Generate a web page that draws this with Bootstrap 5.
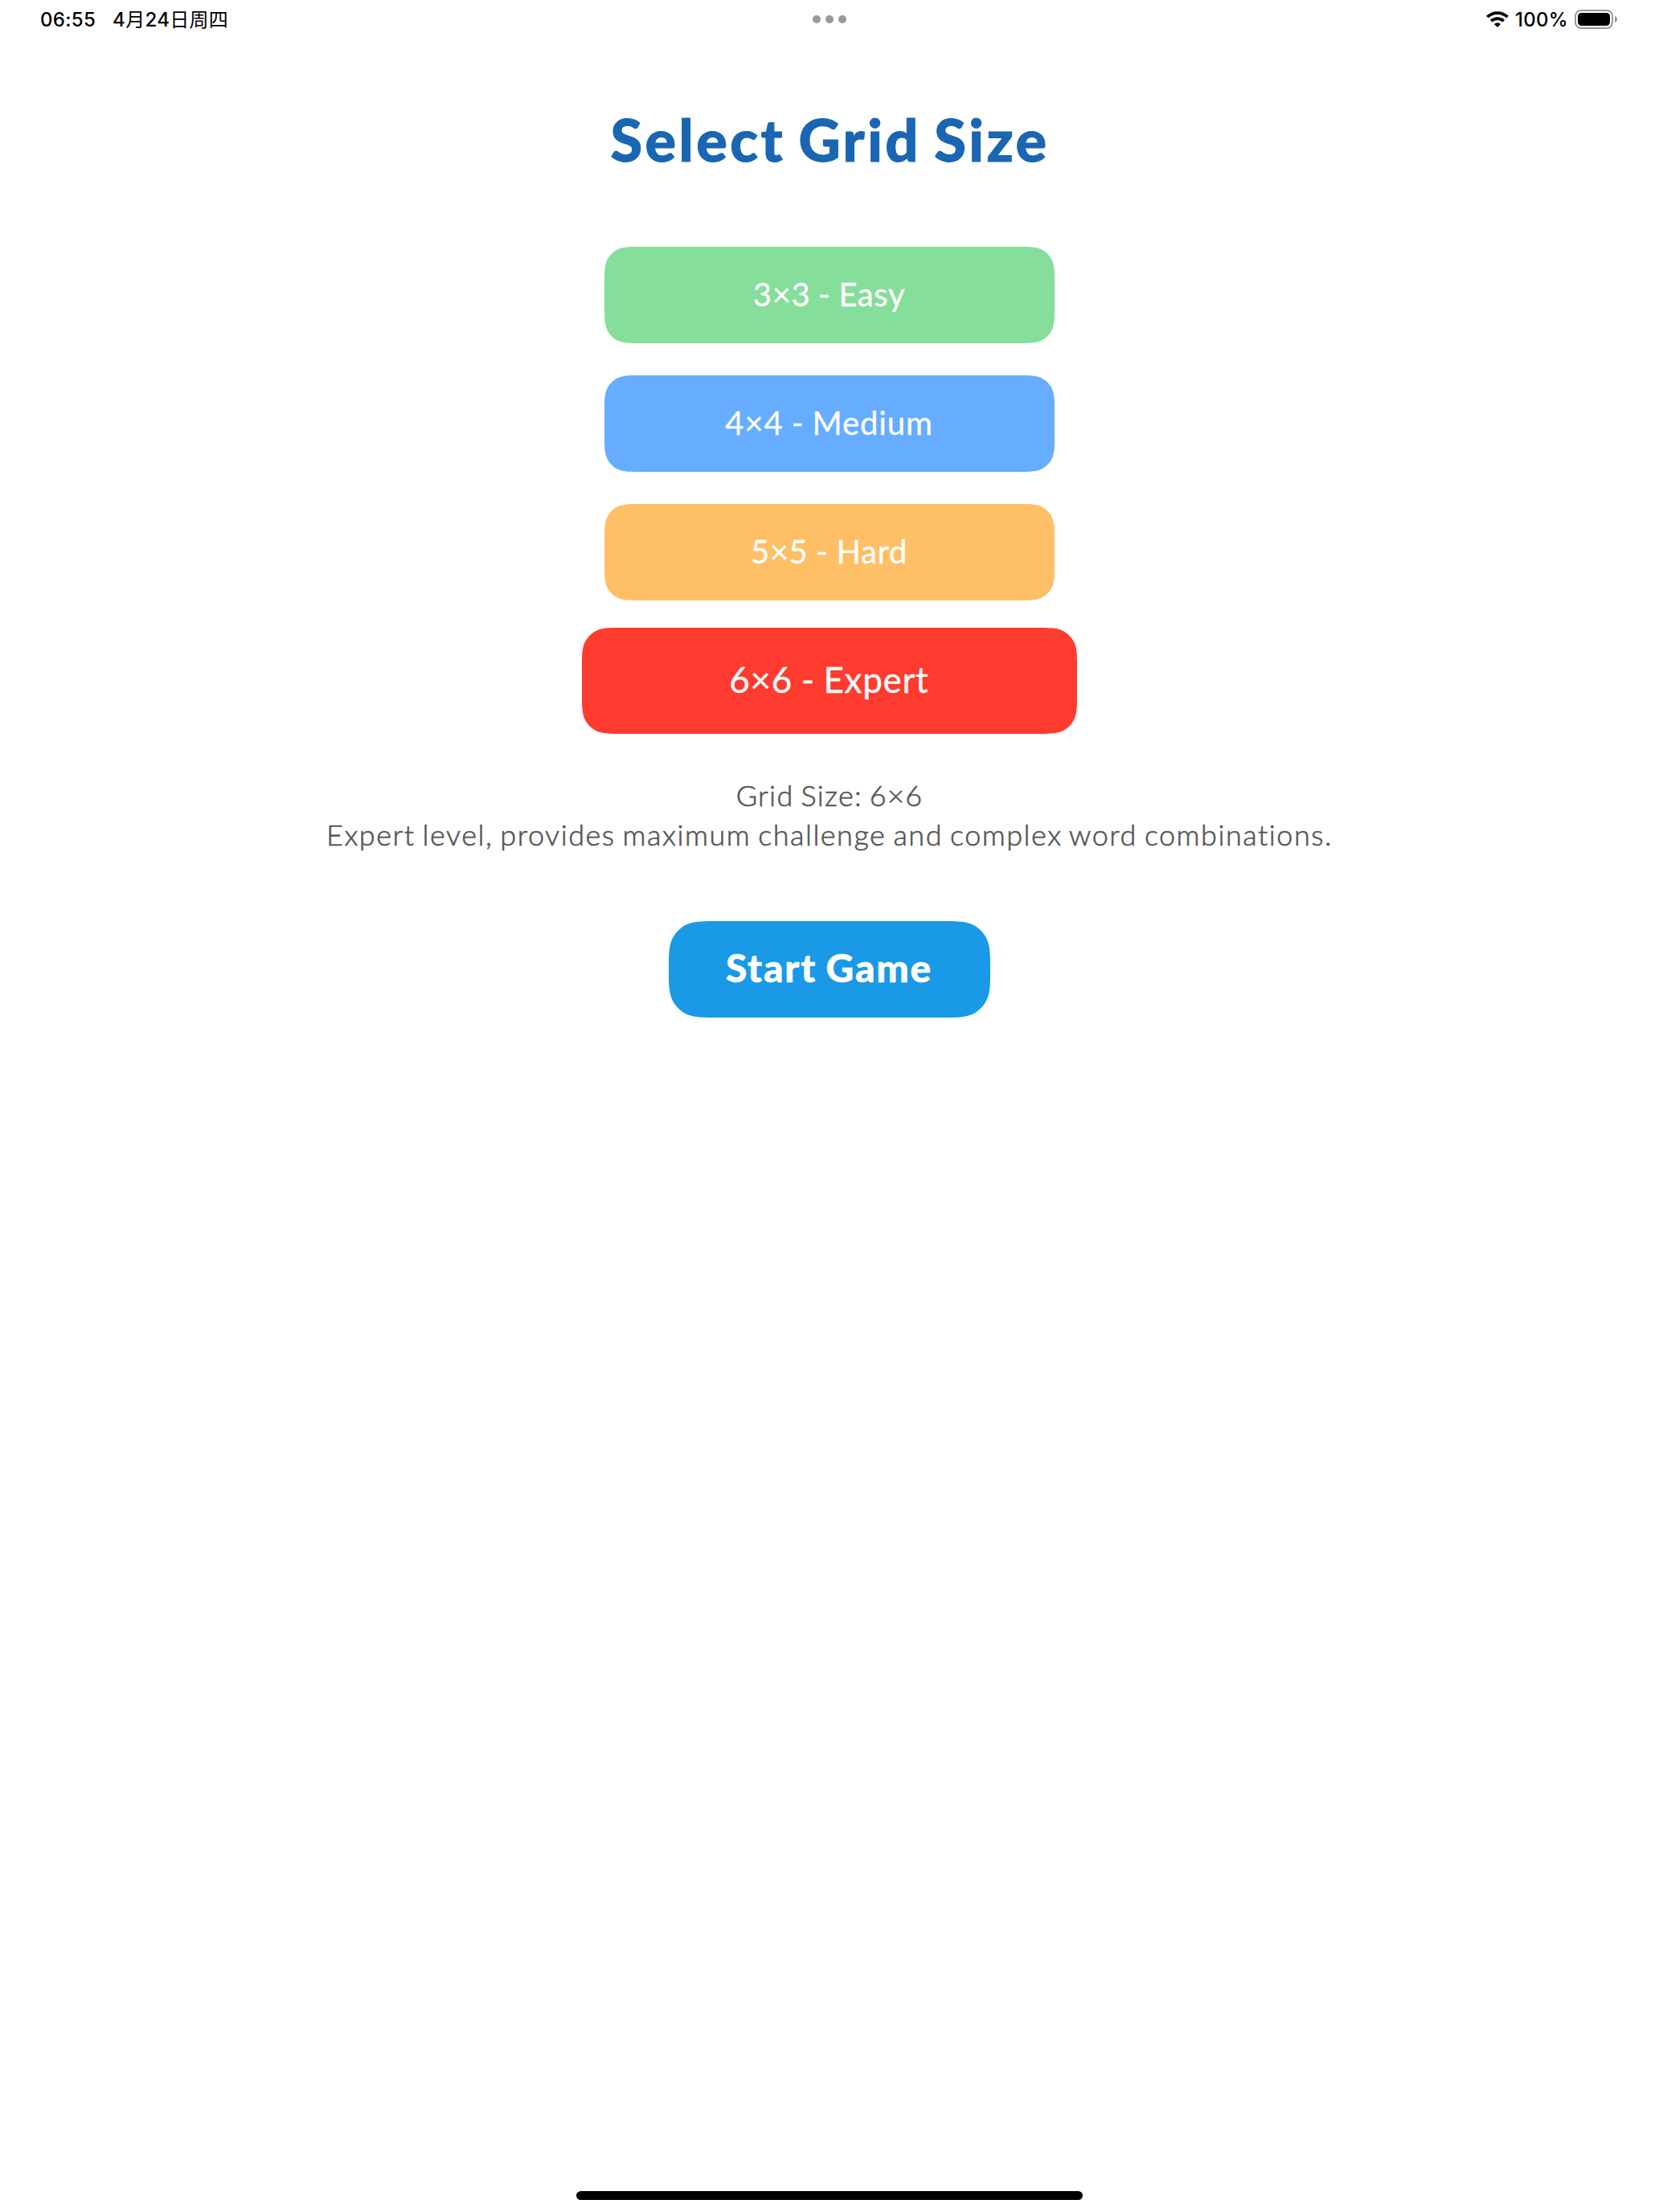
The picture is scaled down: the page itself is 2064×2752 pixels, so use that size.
<!DOCTYPE html>
<html lang="en">
  <head>
    <meta charset="utf-8">
    <meta name="viewport" content="width=device-width, initial-scale=1">
    <title>Select Grid Size</title>
    <link href="https://cdn.jsdelivr.net/npm/bootstrap@5.3.3/dist/css/bootstrap.min.css" rel="stylesheet">
    <style>
      body {
        font-family: Lato, "Open Sans", sans-serif;
        background: #fff;
      }

      .status-bar {
        height: 48px;
        padding: 0 51px 0 50px;
        font: 500 24px/46px Inter, "Noto Sans CJK SC", sans-serif;
        letter-spacing: .3px;
        color: #000;
      }
      .status-side { flex: 1 1 0; }
      .status-time,
      .status-date,
      .status-level { padding-top: 1px; }
      .status-time { margin-right: 21px; }
      .cjk {
        font-family: "Noto Sans CJK SC", sans-serif;
        font-weight: 400;
        line-height: 1;
      }

      .screen-title {
        margin: 76px 0 85px;
        padding-left: 1px;
        font-size: 72px;
        font-weight: 900;
        line-height: 98px;
        letter-spacing: 3.4px;
        word-spacing: -4px;
        -webkit-text-stroke: 1px;
        color: #1a66b3;
      }

      .level-list { gap: 40px; }
      .level-btn,
      .start-btn {
        --bs-btn-color: #fff;
        --bs-btn-hover-color: #fff;
        --bs-btn-active-color: #fff;
        height: 120px;
        border: 0;
        border-radius: 0;
      }
      /* continuous corners, 30px radius */
      .level-btn {
        width: 560px;
        padding: 0 1px 3px 0;
        font-size: 40px;
        letter-spacing: .6px;
        word-spacing: -1px;
        -webkit-text-stroke: .3px;
        clip-path: path("M45.9 0H514.1C527.4 0 534 0 541.1 2.2C548.8 5.1 554.9 11.2 557.8 18.9C560 26 560 32.6 560 45.9V74.1C560 87.4 560 94 557.8 101.1C554.9 108.8 548.8 114.9 541.1 117.8C534 120 527.4 120 514.1 120H45.9C32.6 120 26 120 18.9 117.8C11.2 114.9 5.1 108.8 2.2 101.1C0 94 0 87.4 0 74.1V45.9C0 32.6 0 26 2.2 18.9C5.1 11.2 11.2 5.1 18.9 2.2C26 0 32.6 0 45.9 0Z");
      }
      .level-btn.selected { transform: scale(1.1); }
      .level-easy { background: #86de9b; }
      .level-medium { background: #66adff; letter-spacing: .9px; }
      .level-hard { background: #ffbf66; }
      .level-expert { background: #ff3b30; }

      .level-info {
        margin: 58px 0 83px;
        font-size: 36px;
        font-weight: 300;
        line-height: 49px;
        letter-spacing: 1.5px;
        word-spacing: -2.2px;
        -webkit-text-stroke: .6px;
        color: #555;
      }
      .info-size { letter-spacing: 1.3px; }

      /* continuous corners, 40px radius */
      .start-btn {
        width: 400px;
        padding: 0 1px 4px 0;
        font-size: 48px;
        font-weight: 900;
        letter-spacing: 1.8px;
        word-spacing: -2px;
        -webkit-text-stroke: .5px;
        background: #1a99e6;
        clip-path: path("M60 0H340C356.5 0 365.3 0 374.7 3C385.1 6.8 393.2 14.9 397 25.3C400 34.7 400 43.5 400 60C400 76.5 400 85.3 397 94.7C393.2 105.1 385.1 113.2 374.7 117C365.3 120 356.5 120 340 120H60C43.5 120 34.7 120 25.3 117C14.9 113.2 6.8 105.1 3 94.7C0 85.3 0 76.5 0 60C0 43.5 0 34.7 3 25.3C6.8 14.9 14.9 6.8 25.3 3C34.7 0 43.5 0 60 0Z");
      }

      .home-bar {
        width: 630px;
        height: 11px;
        margin-bottom: 15px;
        background: #000;
      }
    </style>
  </head>
  <body>
    <div class="d-flex flex-column align-items-center min-vh-100">
      <!-- Status bar -->
      <header class="status-bar d-flex align-items-center w-100">
        <div class="status-side d-flex align-items-baseline">
          <span class="status-time">06:55</span>
          <span class="status-date">4<span class="cjk">月</span>24<span class="cjk">日周四</span></span>
        </div>
        <svg width="42" height="10" viewBox="0 0 42 10" fill="#999">
          <circle cx="5" cy="5" r="5"/>
          <circle cx="21" cy="5" r="5"/>
          <circle cx="37" cy="5" r="5"/>
        </svg>
        <div class="status-side d-flex align-items-center justify-content-end">
          <svg class="wifi" width="28" height="20" viewBox="0 0 28 20" fill="none" stroke="#000" stroke-width="3.8">
            <path d="M1.4 7.2a18 18 0 0 1 25.2 0"/>
            <path d="M6.2 12.2a11.2 11.2 0 0 1 15.6 0"/>
            <path d="M14 20l-4.1-4.1a5.9 5.9 0 0 1 8.2 0z" fill="#000" stroke="none"/>
          </svg>
          <span class="status-level ms-2 me-2">100%</span>
          <svg width="54" height="24" viewBox="0 0 54 24">
            <rect x="1" y="1" width="46" height="22" rx="7" fill="none" stroke="#999" stroke-width="2"/>
            <rect x="4" y="4" width="40" height="16" rx="4.5"/>
            <path d="M50 8c4 1 4 7 0 8z" fill="#999"/>
          </svg>
        </div>
      </header>

      <h1 class="screen-title text-center">Select Grid Size</h1>

      <!-- Grid size options -->
      <div class="level-list d-flex flex-column align-items-center">
        <button type="button" class="btn level-btn level-easy">3×3 - Easy</button>
        <button type="button" class="btn level-btn level-medium">4×4 - Medium</button>
        <button type="button" class="btn level-btn level-hard">5×5 - Hard</button>
        <button type="button" class="btn level-btn level-expert selected">6×6 - Expert</button>
      </div>

      <p class="level-info text-center">
        <span class="info-size">Grid Size: 6×6</span><br>
        <span class="info-text">Expert level, provides maximum challenge and complex word combinations.</span>
      </p>

      <button type="button" class="btn start-btn">Start Game</button>

      <div class="home-bar rounded-pill mt-auto"></div>
    </div>

    <script src="https://cdn.jsdelivr.net/npm/bootstrap@5.3.3/dist/js/bootstrap.bundle.min.js"></script>
  </body>
</html>
